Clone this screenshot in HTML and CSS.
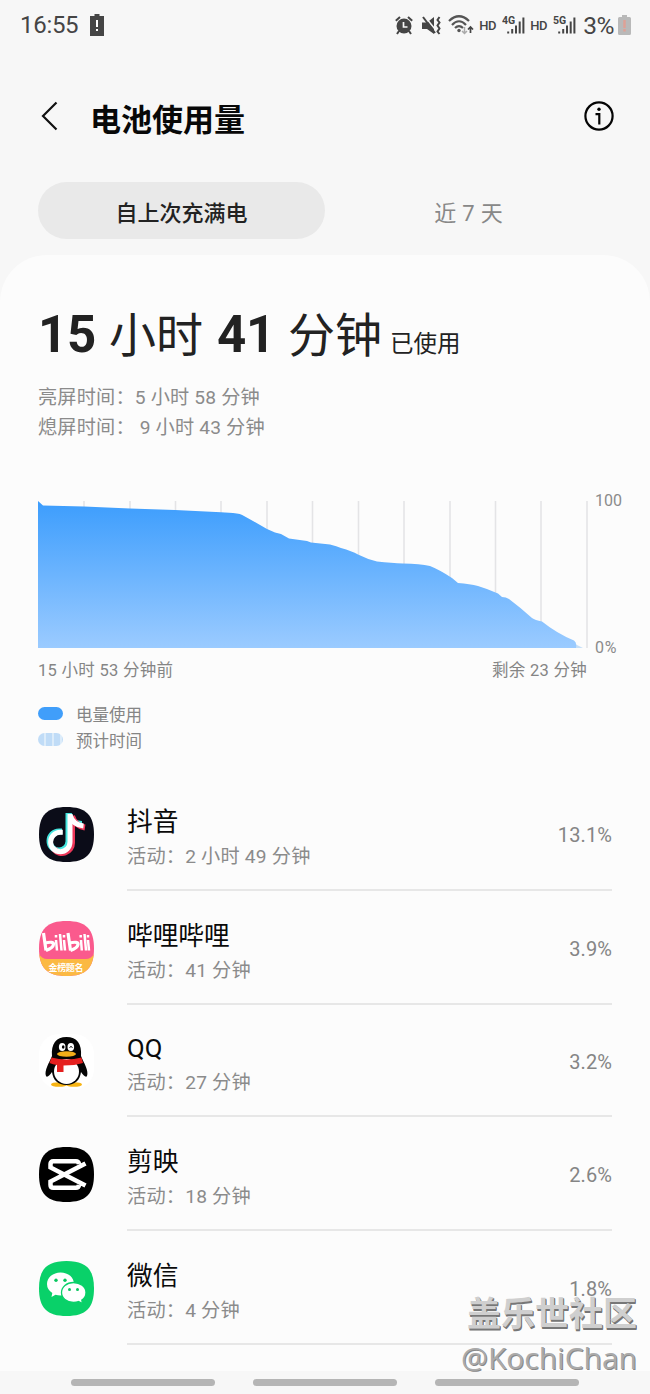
FILE: index.html
```
<!DOCTYPE html>
<html lang="zh-CN">
<head>
<meta charset="utf-8">
<title>电池使用量</title>
<link rel="stylesheet" href="styles.css">
</head>
<body>
<div class="screen">
  <header class="status">
    <span class="clock">16:55</span>
    <svg class="battery-alert" width="15" height="22" viewBox="0 0 15 22"><path fill="#454545" d="M4.500 0h5v2H14v20H0V2h4.500z"/><path stroke="#fff" stroke-width="2" d="M7 6v7M7 15v2"/></svg>
    <div class="status-right">
      <svg width="18" height="19" viewBox="0 0 18 19"><circle cx="9" cy="10" r="7.500" fill="#454545"/><path d="M.8 4.800 5 1M17.200 4.800 13 1M4 15l-2 3M14 15l2 3" stroke="#454545" stroke-width="2"/><path d="M8.500 6v5h4" fill="none" stroke="#f7f7f7" stroke-width="1.700"/></svg>
      <svg class="mute" width="19" height="19" viewBox="0 0 19 19"><path fill="#454545" d="M0 6.500h5L12 1v17l-7-5H0z"/><path d="M2.500 0l12 15" stroke="#f7f7f7" stroke-width="1.500"/><path d="M1 1l12 16" stroke="#454545" stroke-width="2"/><path d="M17.500 1l-2 3 2 2.500-2 3 2 3-2 3 2 2.500" fill="none" stroke="#454545" stroke-width="2"/></svg>
      <svg class="wifi" width="26" height="21" viewBox="0 0 26 21"><g fill="none" stroke="#555" stroke-width="2.200"><path d="M1 6Q11-3.500 21 6M4 10Q11 2.500 18 10M7 13q4-4 8 0"/></g><circle cx="11" cy="15.500" r="1.700" fill="#555"/><path d="M16.500 12v6M14 16l2.500 2.500L19 16" fill="none" stroke="#aaa" stroke-width="1.500"/><path d="M22.500 18v-6M20 14.500l2.500-2.500 2.500 2.500" fill="none" stroke="#454545" stroke-width="1.700"/></svg>
      <span class="hd">HD</span>
      <svg class="signal" width="23" height="20" viewBox="0 0 23 20"><text class="net" x="0" y="9">4G</text><path d="M6.200 16.500v2M10.200 14v4.500M14 10.500v8M17.700 6.500v12M21.400 2.500v16" stroke="#454545" stroke-width="2"/></svg>
      <span class="hd">HD</span>
      <svg class="signal" width="23" height="20" viewBox="0 0 23 20"><text class="net" x="0" y="9">5G</text><path d="M6.200 16.500v2M10.200 14v4.500M14 10.500v8M17.700 6.500v12M21.400 2.500v16" stroke="#454545" stroke-width="2"/></svg>
      <span class="percent">3%</span>
      <svg width="13" height="20" viewBox="0 0 13 20"><path fill="#b9b9b9" d="M4 0h5v2h2.500q1.500 0 1.500 1.500v15q0 1.500-1.500 1.500h-10Q0 20 0 18.500v-15Q0 2 1.500 2H4z"/><path d="M6.500 5v8M6.500 14v2.500" stroke="#dea196" stroke-width="2.500"/></svg>
    </div>
  </header>

  <div class="titlebar">
    <svg width="17" height="30" viewBox="0 0 17 30"><path d="M15.500 1.500 2 15l13.500 13.500" fill="none" stroke="#111" stroke-width="2.200"/></svg>
    <h1>电池使用量</h1>
    <svg class="info" width="30" height="30" viewBox="0 0 30 30"><circle cx="15" cy="15" r="13.600" fill="none" stroke="#050505" stroke-width="2.200"/><circle cx="15" cy="8.300" r="1.700"/><path d="M11.500 13.200H15.300V23.500" fill="none" stroke="#050505" stroke-width="2.200"/></svg>
  </div>

  <nav class="tabs"><div class="tab active">自上次充满电</div><div class="tab">近 7 天</div></nav>

  <main class="card">
    <div class="headline"><b>15</b><span class="unit">小时</span><b>41</b><span class="unit">分钟</span><span class="used">已使用</span></div>
    <div class="detail">亮屏时间：5 小时 58 分钟</div>
    <div class="detail">熄屏时间： 9 小时 43 分钟</div>

    <div class="chart">
      <svg width="551" height="147" viewBox="0 0 551 147">
        <defs><linearGradient id="level" x1="0" y1="0" x2="0" y2="147" gradientUnits="userSpaceOnUse"><stop offset="0" stop-color="#3c9dfd"/><stop offset="1" stop-color="#9bcbff"/></linearGradient></defs>
        <path d="M46 0v147M92 0v147M137.500 0v147M183 0v147M229 0v147M274.500 0v147M320.500 0v147M366 0v147M412 0v147M457.500 0v147M503 0v147M549 0v147" stroke="#e4e4e6" stroke-width="1.600"/>
        <path fill="#c5dff8" d="M534 140l5 4 6 3h-11z"/>
        <path fill="url(#level)" d="M0 0l5 4.500 41 1 46 2 45 1.500 46 2.200 12 .8q8 .5 11 3l9 5 14 8 8 3.500 6 1.500 8 4.500 18 2.500 4 1.500 19 2q7 1.500 11 3.500 11 3 17 6.500 10 5 19 7 15 1.500 26 2 17 .3 27 2.500 10 4 22 12l6 5q12 1 20 3 10 3 20 7.500l4 3.500q4 0 7 2 12 9 23 19 3 2 10 3.500 15 12 32 19 3 2 2 7.500H0z"/>
      </svg>
      <div class="scale"><span>100</span><span class="zero">0%</span></div>
    </div>
    <div class="range"><span>15 小时 53 分钟前</span><span>剩余 23 分钟</span></div>
    <div class="legend"><i class="swatch"></i>电量使用</div>
    <div class="legend"><i class="swatch striped"></i>预计时间</div>

    <section class="apps">
      <article class="app">
        <svg class="icon" viewBox="0 0 55 55"><path fill="#0b0c18" d="M27.500 0C47 0 55 8 55 27.500S47 55 27.500 55 0 47 0 27.500 8 0 27.500 0z"/><g fill="none" stroke-width="6"><path d="M29.500 6v28.500a9.500 9.500 0 1 1-9.500-10H23M30 7q3 10 13 10" stroke="#45e5df"/><path d="M33 8.500V36a10 10 0 0 1-18 6M33 9q3 10 13 11.500" stroke="#ed3759"/><path d="M31 7v28a9.700 9.700 0 1 1-9.700-9.700h2.500M31 8q3 10 13.500 11" stroke="#fff" stroke-width="5"/></g></svg>
        <div class="info-cell"><h2>抖音</h2><p>活动：2 小时 49 分钟</p></div><span class="usage">13.1%</span>
      </article>
      <article class="app">
        <svg class="icon" viewBox="0 0 55 55"><defs><clipPath id="tile"><path d="M27.500 0C47 0 55 8 55 27.500S47 55 27.500 55 0 47 0 27.500 8 0 27.500 0z"/></clipPath></defs><g clip-path="url(#tile)"><path fill="#fa5a8d" d="M0 0h55v55H0z"/><path fill="#fbb943" d="M0 33q3 5 8 5h39q5 0 8-5v22H0z"/></g><g fill="none" stroke="#fff" stroke-width="3.200"><path d="M4.500 12 7 29.500M29 12l2.500 17.500"/><path d="M6 22q9-2 8.500 1.500Q14 27 7 29.500M30.500 22q9-2 8.500 1.500-.5 3.500-7.500 6"/><path stroke-width="2.500" d="M17 19l1 10.500M21 13l1.500 16.500M25 19l1 10.500M42 19l.8 10.500M45.500 13l1.500 16.500M49 19l1 10.500M17 14v2.500M25 14v2.500M41.700 14v2.500M49 14v2.500"/></g><text class="tile-text" x="9.500" y="50" textLength="35">金榜题名</text></svg>
        <div class="info-cell"><h2>哔哩哔哩</h2><p>活动：41 分钟</p></div><span class="usage">3.9%</span>
      </article>
      <article class="app short">
        <svg class="icon" viewBox="0 0 55 55"><rect width="55" height="55" rx="20" fill="#fff"/><ellipse cx="20" cy="50.500" rx="8" ry="2.300" fill="#f7b414"/><ellipse cx="35" cy="50.500" rx="8" ry="2.300" fill="#f7b414"/><path fill="#050505" d="M27.500 3C17 3 12 10 13 22c-3 7-8 15-6 20 1 2 4-1 6-4 1 8 6 13 14.500 13S41 46 42 38c2 3 5 6 6 4 2-5-3-13-6-20C43 10 38 3 27.500 3z"/><ellipse cx="27.500" cy="37.500" rx="12.500" ry="12.500" fill="#fff"/><path fill="#e5201f" d="M12.500 23.500q15 4 30 0l1.500 5.500q-8 2.500-19.500 2.500V38H18v-7q-4-.5-7.500-2z"/><ellipse cx="27.500" cy="20" rx="9.500" ry="2.800" fill="#f4ae18"/><ellipse cx="23.200" cy="13" rx="3.300" ry="4" fill="#fff"/><ellipse cx="31.800" cy="13" rx="3.300" ry="4" fill="#fff"/><ellipse cx="24.200" cy="13" rx="1.300" ry="1.800"/><path d="M30.500 13.500q1.500-2 3 0" fill="none" stroke="#050505"/></svg>
        <div class="info-cell"><h2>QQ</h2><p>活动：27 分钟</p></div><span class="usage">3.2%</span>
      </article>
      <article class="app">
        <svg class="icon" viewBox="0 0 55 55"><path d="M27.500 0C47 0 55 8 55 27.500S47 55 27.500 55 0 47 0 27.500 8 0 27.500 0z"/><path d="M46.500 16.500 11.500 34.500v3.500q0 2.700 2.700 2.700H37q2.500 0 3-2.700M46.500 38.500 11.500 20.500v-3.500q0-2.700 2.700-2.700H37q2.500 0 3 2.700" fill="none" stroke="#fff" stroke-width="4.500"/></svg>
        <div class="info-cell"><h2>剪映</h2><p>活动：18 分钟</p></div><span class="usage">2.6%</span>
      </article>
      <article class="app">
        <svg class="icon" viewBox="0 0 55 55"><path fill="#09d169" d="M27.500 0C47 0 55 8 55 27.500S47 55 27.500 55 0 47 0 27.500 8 0 27.500 0z"/><path fill="#fff" d="M21.500 11.500c8 0 13.500 5 13.500 11.500S29 34.500 21.500 34.500q-2.500 0-5-.7L12.500 36l.8-4Q8 28.500 8 23c0-6.500 6-11.500 13.500-11.500z"/><path fill="#fff" stroke="#09d169" stroke-width="1.300" d="M34.500 21.500C41 21.500 47 25.500 47 31.500q0 5-4.200 7.500l.7 3.500-4-2q-2 .8-5 .8c-7 0-12-4.300-12-9.800s5-10 12-10z"/><g fill="#09c760"><circle cx="17" cy="19.300" r="1.700"/><circle cx="26" cy="19.300" r="1.700"/><circle cx="30.500" cy="28.500" r="1.500"/><circle cx="38.500" cy="28.500" r="1.500"/></g></svg>
        <div class="info-cell"><h2>微信</h2><p>活动：4 分钟</p></div><span class="usage">1.8%</span>
      </article>
    </section>
  </main>
  <footer class="navbar"><i></i><i></i><i></i></footer>
  <div class="watermark"><div class="community">盖乐世社区</div><div class="author">@KochiChan</div></div>
</div>
</body>
</html>
```
FILE: styles.css
```
* { box-sizing: border-box; }
body { margin: 0; background: #f7f7f7; font-family: Roboto, "Noto Sans CJK SC", sans-serif; color: #222; }
svg { display: block; flex: none; }
h1, h2, p { margin: 0; font-weight: 400; }
.screen { position: relative; width: 650px; height: 1394px; overflow: hidden; display: flex; flex-direction: column; }
.status { height: 50px; display: flex; align-items: center; padding: 0 19px 0 20px; color: #454545; flex: none; }
.clock { font-size: 24px; width: 70px; white-space: nowrap; letter-spacing: -.3px; }
.status-right { margin-left: auto; display: flex; align-items: center; }
.mute { margin-left: 9px; }
.wifi { margin-left: 7px; }
.hd { font-size: 13px; font-weight: 500; width: 17px; margin-left: 5px; letter-spacing: -.5px; }
.signal { margin-left: 6px; }
.net { font-size: 10.500px; font-weight: 700; fill: #454545; }
.percent { font-size: 24.500px; margin: 0 4px 0 7px; letter-spacing: -.5px; }
.titlebar { height: 132px; display: flex; align-items: center; padding: 0 36px 0 41px; flex: none; }
.titlebar h1 { font-size: 31px; font-weight: 700; line-height: 40px; color: #080808; margin-left: 32px; padding-top: 8px; margin-bottom: -1px; }
.titlebar .info { margin-left: auto; }
.tabs { height: 57px; margin: 0 38px; display: flex; flex: none; }
.tab { width: 287px; display: flex; align-items: center; justify-content: center; font-size: 22px; color: #888; word-spacing: .7px; }
.tab.active { background: #e9e9e9; border-radius: 29px; font-weight: 500; color: #222; }
.card { margin-top: 16px; height: 1116px; padding: 48px 38px 0; background: #fcfcfc; border-radius: 47px 47px 0 0; flex: none; }
.headline { display: flex; align-items: baseline; height: 80px; line-height: 64px; white-space: nowrap; }
.headline b { font-size: 51px; font-weight: 700; width: 71px; letter-spacing: -.3px; }
.unit { font-size: 47px; width: 108px; }
.unit:nth-of-type(2) { width: 102px; }
.used { font-size: 23.500px; }
.detail { font-size: 19.200px; line-height: 30px; color: #8b8b8b; letter-spacing: .17px; }
.chart { margin-top: 58px; display: flex; height: 147px; }
.scale { margin: -10px 0 -10px 6px; display: flex; flex-direction: column; justify-content: space-between; font-size: 16px; line-height: 20px; color: #8b8b8b; }
.zero { letter-spacing: .7px; }
.range { display: flex; justify-content: space-between; width: 549px; margin-top: 10px; height: 43px; font-size: 16.500px; line-height: 25px; color: #858585; letter-spacing: .2px; word-spacing: .3px; }
.legend { display: flex; align-items: center; height: 26px; font-size: 16.500px; color: #858585; }
.swatch { width: 25px; height: 13px; border-radius: 7px; background: #409efa; margin: -2px 13px 0 0; }
.striped { background: repeating-linear-gradient(90deg, #c0dcf7 0 6px, #dcecfa 6px 8px); }
.apps { margin-top: 24px; }
.app { height: 114px; display: flex; align-items: center; padding-left: 1px; }
.app.short { height: 112px; }
.icon { width: 55px; height: 55px; }
.info-cell { width: 485px; height: 100%; margin-left: 33px; padding-top: 26px; border-bottom: 2px solid #e7e7e7; }
.short .info-cell { padding-top: 24px; }
.app h2 { font-size: 25.700px; line-height: 38px; color: #0a0a0a; }
.app p { font-size: 19.200px; line-height: 31px; color: #8b8b8b; letter-spacing: .2px; }
.usage { width: 70px; margin-left: -70px; padding-top: 2px; text-align: right; font-size: 20px; color: #858585; letter-spacing: .1px; }
.tile-text { font-size: 9px; font-weight: 700; fill: #fff; }
.navbar { height: 23px; display: flex; gap: 38px; padding: 8px 71px; }
.navbar i { width: 144px; height: 7px; border-radius: 4px; background: #b5b5b5; }
.watermark { position: absolute; right: 13px; top: 1292px; text-align: right; white-space: nowrap; }
.community { font-size: 34px; line-height: 44px; font-weight: 700; color: #cfcfcf; text-shadow: 1px 1px 0 #777, 1px 2px 0 #777; }
.author { font-family: "Open Sans", sans-serif; font-size: 30px; line-height: 44px; color: #aaa; text-shadow: 1px 1px 0 #888; }
```
